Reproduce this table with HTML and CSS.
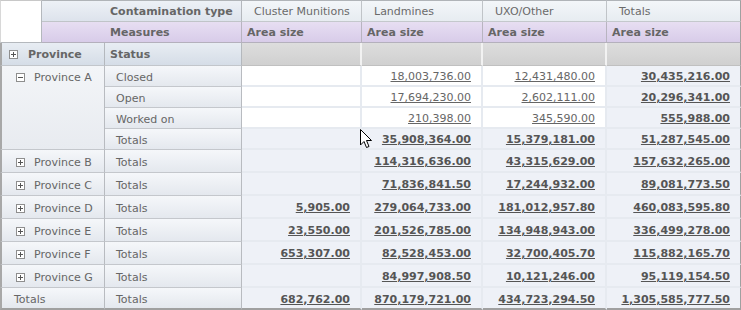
FILE: index.html
```html
<!DOCTYPE html>
<html>
<head>
<meta charset="utf-8">
<link rel="stylesheet" href="styles.css">
</head>
<body>
<div class="pivot">
  <div class="corner"></div>
  <div class="hdr span2 lbl">Contamination type</div>
  <div class="colhdr">Cluster Munitions</div>
  <div class="colhdr">Landmines</div>
  <div class="colhdr">UXO/Other</div>
  <div class="colhdr last">Totals</div>

  <div class="meas span2 lbl">Measures</div>
  <div class="meas m">Area size</div>
  <div class="meas m">Area size</div>
  <div class="meas m">Area size</div>
  <div class="meas m last">Area size</div>

  <div class="filt prov span2a"><span class="box plus"></span>Province</div>
  <div class="filt stat">Status</div>
  <div class="grey"></div>
  <div class="grey"></div>
  <div class="grey"></div>
  <div class="grey last"></div>

  <div class="rh prov provA"><span class="box minus"></span>Province A</div>
  <div class="rh st">Closed</div>
  <div class="d"></div>
  <div class="d"><a>18,003,736.00</a></div>
  <div class="d"><a>12,431,480.00</a></div>
  <div class="d t last"><a>30,435,216.00</a></div>

  <div class="rh st">Open</div>
  <div class="d"></div>
  <div class="d"><a>17,694,230.00</a></div>
  <div class="d"><a>2,602,111.00</a></div>
  <div class="d t last"><a>20,296,341.00</a></div>

  <div class="rh st">Worked on</div>
  <div class="d"></div>
  <div class="d"><a>210,398.00</a></div>
  <div class="d"><a>345,590.00</a></div>
  <div class="d t last"><a>555,988.00</a></div>

  <div class="rh st">Totals</div>
  <div class="d t"></div>
  <div class="d t"><a>35,908,364.00</a></div>
  <div class="d t"><a>15,379,181.00</a></div>
  <div class="d t last"><a>51,287,545.00</a></div>

  <div class="rh prov"><span class="box plus"></span>Province B</div>
  <div class="rh st">Totals</div>
  <div class="d t"></div>
  <div class="d t"><a>114,316,636.00</a></div>
  <div class="d t"><a>43,315,629.00</a></div>
  <div class="d t last"><a>157,632,265.00</a></div>

  <div class="rh prov"><span class="box plus"></span>Province C</div>
  <div class="rh st">Totals</div>
  <div class="d t"></div>
  <div class="d t"><a>71,836,841.50</a></div>
  <div class="d t"><a>17,244,932.00</a></div>
  <div class="d t last"><a>89,081,773.50</a></div>

  <div class="rh prov"><span class="box plus"></span>Province D</div>
  <div class="rh st">Totals</div>
  <div class="d t"><a>5,905.00</a></div>
  <div class="d t"><a>279,064,733.00</a></div>
  <div class="d t"><a>181,012,957.80</a></div>
  <div class="d t last"><a>460,083,595.80</a></div>

  <div class="rh prov"><span class="box plus"></span>Province E</div>
  <div class="rh st">Totals</div>
  <div class="d t"><a>23,550.00</a></div>
  <div class="d t"><a>201,526,785.00</a></div>
  <div class="d t"><a>134,948,943.00</a></div>
  <div class="d t last"><a>336,499,278.00</a></div>

  <div class="rh prov"><span class="box plus"></span>Province F</div>
  <div class="rh st">Totals</div>
  <div class="d t"><a>653,307.00</a></div>
  <div class="d t"><a>82,528,453.00</a></div>
  <div class="d t"><a>32,700,405.70</a></div>
  <div class="d t last"><a>115,882,165.70</a></div>

  <div class="rh prov"><span class="box plus"></span>Province G</div>
  <div class="rh st">Totals</div>
  <div class="d t"></div>
  <div class="d t"><a>84,997,908.50</a></div>
  <div class="d t"><a>10,121,246.00</a></div>
  <div class="d t last"><a>95,119,154.50</a></div>

  <div class="rh prov gt">Totals</div>
  <div class="rh st">Totals</div>
  <div class="d t"><a>682,762.00</a></div>
  <div class="d t"><a>870,179,721.00</a></div>
  <div class="d t"><a>434,723,294.50</a></div>
  <div class="d t last"><a>1,305,585,777.50</a></div>

  <svg class="cursor" width="13" height="20" viewBox="0 0 13 20"><path d="M0.5 0.5 L0.5 16 L4 12.5 L6.5 18.5 L9 17.5 L6.5 11.5 L11.5 11.5 Z" fill="#fff" stroke="#000" stroke-width="1" stroke-linejoin="miter"/></svg>
</div>
</body>
</html>
```
FILE: styles.css
```css
html, body { margin: 0; padding: 0; background: #fff; }
body { font-family: "DejaVu Sans", Verdana, sans-serif; font-size: 11px; color: #666; }

.pivot {
  position: relative;
  display: grid;
  grid-template-columns: 42px 63px 137px 120px 121px 124px 134px;
  grid-template-rows: 22px 21px 23px 21px 21px 21px 21px 23px 23px 23px 23px 23px 23px 22px;
  width: 741px;
}
.pivot > div { box-sizing: border-box; display: flex; align-items: center; white-space: nowrap; }

.corner { grid-row: 1 / span 2; grid-column: 1; border-top: 1px solid #c8c8c8; border-left: 1px solid #d8d8d8; border-right: 1px solid #b4b8bd; border-bottom: 1px solid #b4b8bd; background: #fff; }
.span2 { grid-column: 2 / span 2; }
.lbl { padding-left: 68px; font-weight: bold; }

.hdr { background: linear-gradient(#edf1f6, #dde3ec); border-top: 1px solid #b0b4b8; border-right: 1px solid #b4b8bd; border-bottom: 1px solid #c0c4c8; padding-top: 1px; }
.colhdr { background: linear-gradient(#f3f6f9, #e7ecf1); border-top: 1px solid #b0b4b8; border-right: 1px solid #c0c4c8; border-bottom: 1px solid #c4c8cc; padding-left: 12px; padding-top: 1px; color: #6a6a6a; }
.meas { background: linear-gradient(#e7def2, #d8cce9); border-right: 1px solid #b8b4c0; border-bottom: 1px solid #b4b0bc; font-weight: bold; padding-top: 1px; }
.meas.m { padding-left: 5px; }
.last { border-right: 1px solid #a0a0a0 !important; }

.filt { background: linear-gradient(#e8edf3, #d5dde7); border-right: 1px solid #b4b8bd; border-bottom: 1px solid #c2c6cb; font-weight: bold; }
.span2a { grid-column: 1 / span 2; border-left: 2px solid #a8a8a8; }
.filt.prov { padding-left: 7px; }
.filt.stat { padding-left: 5px; }
.grey { background: linear-gradient(#dddddd, #d0d0d0); border-right: 2px solid #f2f2f2; border-bottom: 1px solid #c0c0c0; }

.rh { background: linear-gradient(#f5f7fa, #e4e8ee); border-right: 1px solid #b8bbc0; border-bottom: 1px solid #c4c7cc; color: #666; padding-top: 2px; }
.rh.prov { grid-column: 1 / span 2; border-left: 2px solid #a8a8a8; padding-left: 14px; }
.provA { grid-row: 4 / span 4; align-items: flex-start !important; padding-top: 5px; background: linear-gradient(#f3f5f8, #e8ebf0) !important; }
.rh.st { padding-left: 11px; }
.rh.gt { padding-left: 12px; border-bottom: 2px solid #a0a0a0; }
.rh.gt + .st { border-bottom: 2px solid #a0a0a0; }

.box { display: inline-block; box-sizing: border-box; width: 9px; height: 9px; border: 1px solid #8e8e8e; background: #fff; position: relative; margin-right: 9px; flex: none; }
.provA .box { margin-top: 2px; }
.box::before { content: ""; position: absolute; left: 1px; top: 3px; width: 5px; height: 1px; background: #555; }
.plus::after { content: ""; position: absolute; left: 3px; top: 1px; width: 1px; height: 5px; background: #555; }
.filt .box { margin-right: 10px; }

.d { background: #fff; border-right: 2px solid #e6eaf0; border-bottom: 2px solid #e6eaf0; justify-content: flex-end; padding-right: 10px; padding-top: 2px; }
.d.t { background: #eef1f7; font-weight: bold; color: #555; }
.d a { text-decoration: underline; color: #666; }
.d.t a { color: #555; }
.d.last { border-right: 1px solid #a0a0a0; }
.pivot > div:nth-last-child(-n+5) { border-bottom: 2px solid #a0a0a0; }

.cursor { position: absolute; left: 360px; top: 129px; }
```
